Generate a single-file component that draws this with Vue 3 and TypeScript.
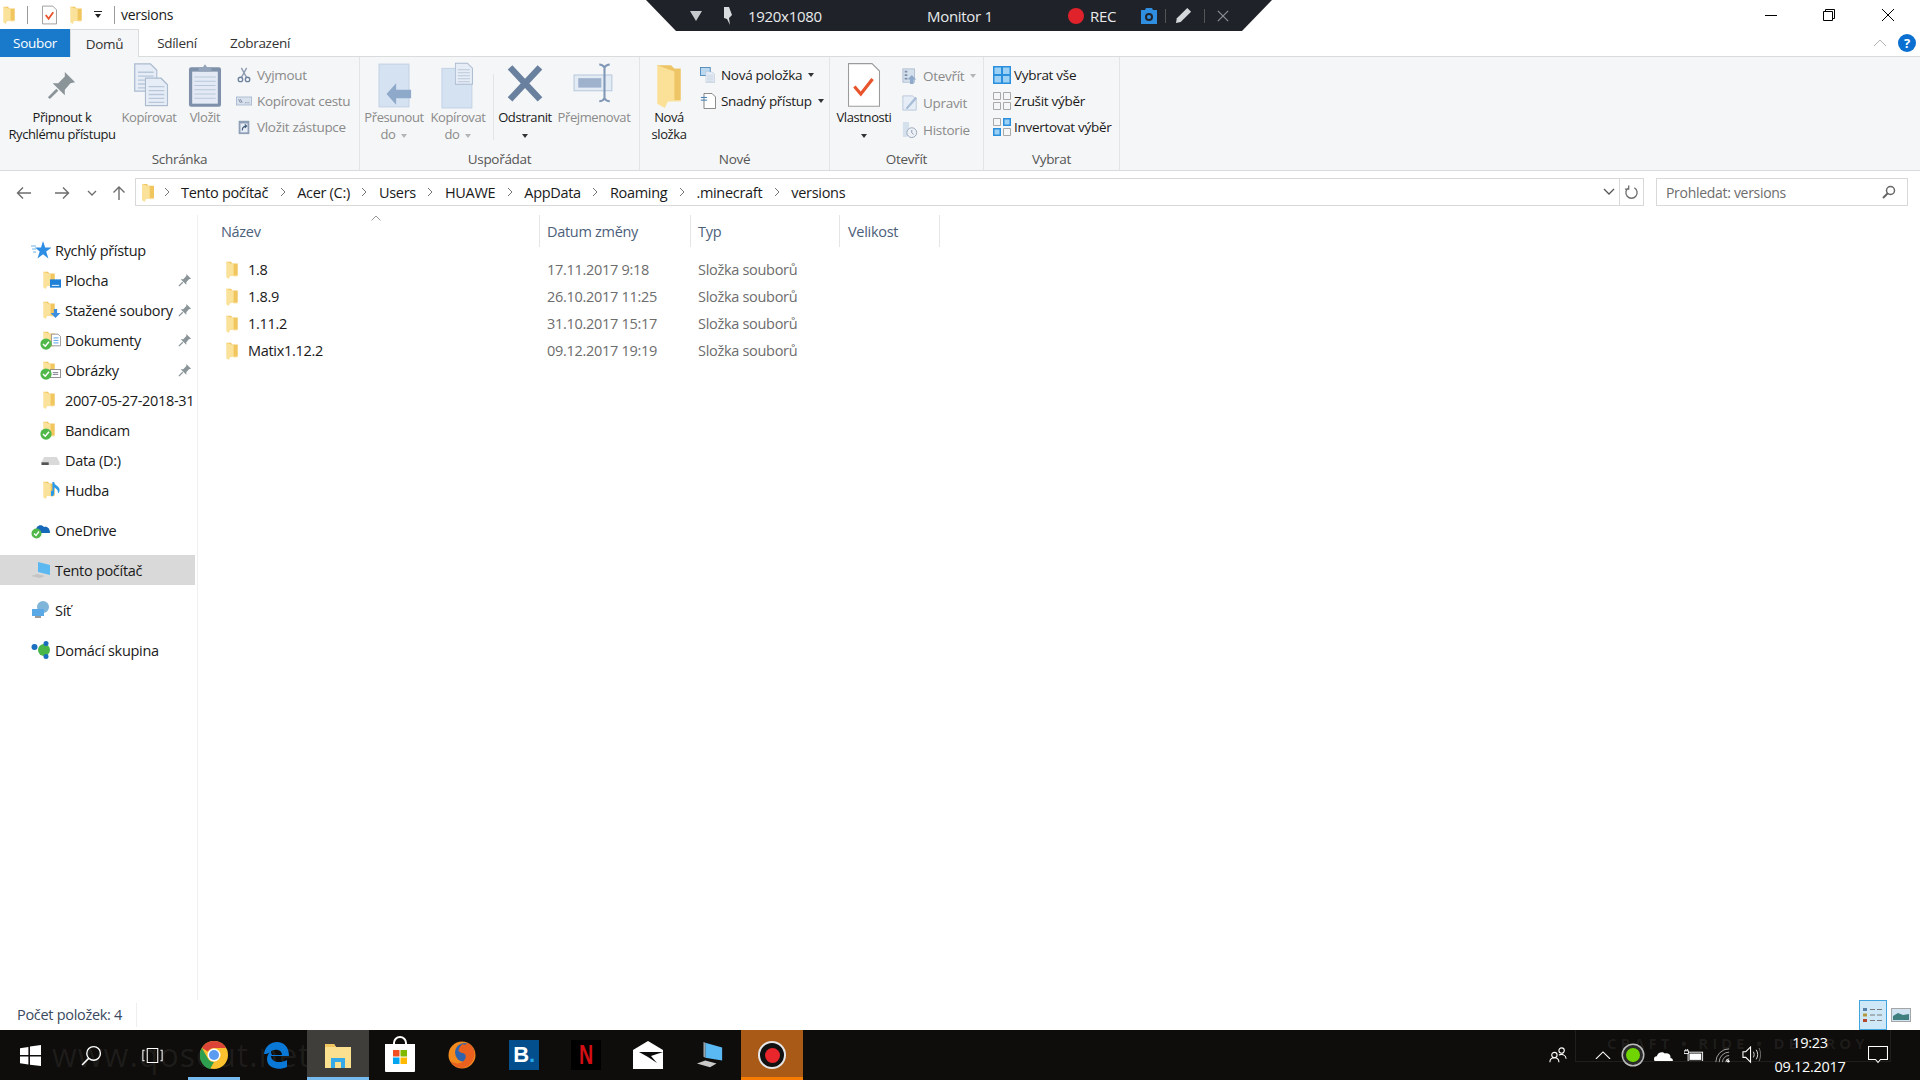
<script setup lang="ts">
interface NavItem {
  name: string
  icon: string
  badge?: string
  check?: boolean
  pin?: boolean
}

const crumbs = ['Tento počítač', 'Acer (C:)', 'Users', 'HUAWE', 'AppData', 'Roaming', '.minecraft', 'versions']

const quick: NavItem[] = [
  { name: 'Plocha', icon: 'folder', badge: 'desk', pin: true },
  { name: 'Stažené soubory', icon: 'folder', badge: 'down', pin: true },
  { name: 'Dokumenty', icon: 'folder', badge: 'doc', check: true, pin: true },
  { name: 'Obrázky', icon: 'folder', badge: 'pic', check: true, pin: true },
  { name: '2007-05-27-2018-31', icon: 'folder' },
  { name: 'Bandicam', icon: 'folder', check: true },
  { name: 'Data (D:)', icon: 'drive' },
  { name: 'Hudba', icon: 'folder', badge: 'music' }
]

const files = [
  { name: '1.8', date: '17.11.2017 9:18' },
  { name: '1.8.9', date: '26.10.2017 11:25' },
  { name: '1.11.2', date: '31.10.2017 15:17' },
  { name: 'Matix1.12.2', date: '09.12.2017 19:19' }
]
</script>

<template>
  <div class="screen">
    <svg class="defs" width="0" height="0">
      <symbol id="folder" viewBox="0 0 14 22">
        <path d="M0 1h6l1 2h7v15H4z" fill="#f2c65f" />
        <path d="M0 1l9 3v15l4 0v-1H5L3 22 0 20z" fill="#fbe29a" />
      </symbol>
      <symbol id="check" viewBox="0 0 16 16">
        <circle cx="8" cy="8" r="7.5" fill="#4fb848" />
        <path d="M4 8l3 3 5-6" fill="none" stroke="#fff" stroke-width="2" />
      </symbol>
      <symbol id="pin" viewBox="0 0 32 32">
        <path d="M19 2l11 11-5 1-6 7 0 6L6 14l6 0 7-7z" fill="#8b9599" />
        <path d="M11 21L2 30" stroke="#8b9599" stroke-width="3" />
      </symbol>
      <symbol id="page" viewBox="0 0 18 22">
        <path d="M.5.500h12l5 5v16H.5z" fill="#e6edf6" stroke="#aabbd0" />
        <path d="M3 7h12M3 10h12M3 13h12M3 16h12M3 19h12" stroke="#b8c7d9" />
      </symbol>
      <symbol id="grid-on" viewBox="0 0 18 18">
        <path d="M0 0h18v18H0z" fill="#2a8fdc" />
        <path d="M1.500 1.500h6.500v6.500H1.500zM10 1.500h6.500v6.500H10zM1.500 10h6.500v6.500H1.500zM10 10h6.500v6.500H10z" fill="#9cd0f4" />
      </symbol>
      <symbol id="grid-off" viewBox="0 0 18 18">
        <path d="M.5.500h7v7h-7zM10.500.500h7v7h-7zM.500 10.500h7v7h-7zM10.500 10.500h7v7h-7z" fill="none" stroke="#a9a9a9" />
      </symbol>
    </svg>

    <header class="titlebar">
      <svg class="t-folder"><use href="#folder" /></svg>
      <span class="t-sep"></span>
      <svg class="t-check" viewBox="0 0 16 20">
        <path d="M.5.500h11l4 4v15H.5z" fill="#fff" stroke="#9a9a9a" />
        <path d="M4 10l3 4 5-7" fill="none" stroke="#e8552d" stroke-width="2" />
      </svg>
      <svg class="t-folder2"><use href="#folder" /></svg>
      <svg class="t-drop" viewBox="0 0 8 7"><path d="M0 0h8v1H0zM1 3h6L4 7z" fill="#222" /></svg>
      <span class="t-sep t-sep2"></span>
      <span class="t-name">versions</span>
      <div class="win-btns">
        <svg viewBox="0 0 14 14"><path d="M1 7.500h12" stroke="#000" /></svg>
        <svg viewBox="0 0 14 14"><path d="M1.500 3.500h9v9h-9zM3.500 3.500v-2h9v9h-2" fill="none" stroke="#000" /></svg>
        <svg viewBox="0 0 14 14"><path d="M1 1l12 12M13 1L1 13" stroke="#000" /></svg>
      </div>
    </header>

    <div class="recorder">
      <svg class="r-tri" viewBox="0 0 12 10"><path d="M0 0h12L6 10z" fill="#c6c9cc" /></svg>
      <svg class="r-pin" viewBox="0 0 12 20">
        <path d="M3 1h5l3 8-3 3 1 7-3-6-3-1z" fill="#d9dcdf" />
      </svg>
      <span class="r-res">1920x1080</span>
      <span class="r-mon">Monitor 1</span>
      <span class="r-dot"></span>
      <span class="r-rec">REC</span>
      <svg class="r-cam" viewBox="0 0 18 18">
        <path d="M1 3h4l1-2h6l1 2h4v14H1z" fill="#2f8ee0" />
        <circle cx="9" cy="10" r="4" fill="#1f2329" />
        <circle cx="9" cy="10" r="2" fill="#2f8ee0" />
      </svg>
      <span class="r-sep"></span>
      <svg class="r-pen" viewBox="0 0 18 18"><path d="M13 1l4 4L6 16l-5 1 1-5z" fill="#d5d8db" /></svg>
      <span class="r-sep r-sep2"></span>
      <svg class="r-x" viewBox="0 0 14 14"><path d="M1 1l12 12M13 1L1 13" stroke="#878b90" stroke-width="1.500" /></svg>
    </div>

    <nav class="tabs">
      <span class="tab tab-file">Soubor</span>
      <span class="tab tab-home">Domů</span>
      <span class="tab tab-share">Sdílení</span>
      <span class="tab tab-view">Zobrazení</span>
      <svg class="tab-up" viewBox="0 0 14 8"><path d="M1 7l6-6 6 6" fill="none" stroke="#b5b5b5" /></svg>
      <span class="help">?</span>
    </nav>

    <section class="ribbon">
      <div class="group g-clip">
        <div class="body">
          <div class="big w-pin">
            <svg class="ico"><use href="#pin" x="6" y="8" width="30" height="30" /></svg>
            <span>Připnout k<br />Rychlému přístupu</span>
          </div>
          <div class="big w-copy off">
            <svg class="ico" viewBox="0 0 36 44">
              <g transform="translate(4 1)"><use href="#page" width="22" height="27" /></g>
              <g transform="translate(14 14)"><use href="#page" width="22" height="28" /></g>
            </svg>
            <span>Kopírovat</span>
          </div>
          <div class="big w-paste off">
            <svg class="ico" viewBox="0 0 36 44">
              <rect x="3" y="5" width="30" height="37" rx="2" fill="#7e90aa" />
              <rect x="6" y="9" width="24" height="30" fill="#e3eaf5" />
              <path d="M8 14h20M8 18h20M8 22h20M8 26h20M8 30h20M8 34h20" stroke="#b9c7da" />
              <path d="M12 9V5h4l2-3 2 3h4v4z" fill="#93a3b9" />
            </svg>
            <span>Vložit</span>
          </div>
          <div class="small-col">
            <div class="small off">
              <svg viewBox="0 0 16 18"><path d="M5 1l6 11M11 1L5 12" stroke="#8d9bb0" stroke-width="1.500" /><circle cx="4" cy="14" r="2.500" fill="none" stroke="#6f82a0" stroke-width="1.500" /><circle cx="12" cy="14" r="2.500" fill="none" stroke="#6f82a0" stroke-width="1.500" /></svg>
              <span>Vyjmout</span>
            </div>
            <div class="small off">
              <svg viewBox="0 0 18 14"><rect x=".5" y="2.500" width="17" height="9" fill="#d8e2ef" stroke="#a9b9ce" /><path d="M3 5l2 4M5 5l2 4M10 9h1M12 9h1M14 9h1" stroke="#6f7f95" /></svg>
              <span>Kopírovat cestu</span>
            </div>
            <div class="small off">
              <svg viewBox="0 0 16 18"><rect x="2" y="2" width="12" height="15" fill="#8d9eb6" /><rect x="4" y="5" width="8" height="10" fill="#e6edf6" /><path d="M6 13c0-3 2-5 5-5M9 6l2 2-2 2" fill="none" stroke="#40597a" stroke-width="1.200" /></svg>
              <span>Vložit zástupce</span>
            </div>
          </div>
        </div>
        <div class="g-label">Schránka</div>
      </div>

      <div class="group g-org">
        <div class="body">
          <div class="big w-move off">
            <svg class="ico" viewBox="0 0 36 44">
              <rect x="4" y="2" width="28" height="40" fill="#d5e2f2" stroke="#c3d3e6" />
              <path d="M12 22l-9 10 9 10v-6h14V28H12z" fill="#8fa9ca" transform="translate(8 -2)" />
            </svg>
            <span>Přesunout<br />do<i class="caret off-caret"></i></span>
          </div>
          <div class="big w-copyto off">
            <svg class="ico" viewBox="0 0 36 44">
              <rect x="3" y="6" width="28" height="37" fill="#d5e2f2" stroke="#c3d3e6" />
              <g transform="translate(15 0)"><use href="#page" width="17" height="22" /></g>
            </svg>
            <span>Kopírovat<br />do<i class="caret off-caret"></i></span>
          </div>
          <span class="in-sep"></span>
          <div class="big w-del">
            <svg class="ico" viewBox="0 0 36 44"><path d="M4 5l28 30M32 5L4 35" stroke="#69809f" stroke-width="6" /></svg>
            <span>Odstranit<br /><i class="caret"></i></span>
          </div>
          <div class="big w-ren off">
            <svg class="ico" viewBox="0 0 40 44">
              <rect x="1" y="12" width="36" height="15" fill="#e3ebf5" stroke="#b8c8dc" />
              <rect x="5" y="15" width="22" height="9" fill="#9fb2cd" />
              <path d="M25 2c2 0 4 1 5 3 1-2 3-3 5-3M30 5v29M25 37c2 0 4-1 5-3 1 2 3 3 5 3" fill="none" stroke="#8198b6" stroke-width="2" />
            </svg>
            <span>Přejmenovat</span>
          </div>
        </div>
        <div class="g-label">Uspořádat</div>
      </div>

      <div class="group g-new">
        <div class="body">
          <div class="big w-newf">
            <svg class="ico" viewBox="0 0 36 44">
              <path d="M7 3h13l3 3h6v30H16z" fill="#eec566" />
              <path d="M7 3l16 6v27h6v1H17l-3 6-7-4z" fill="#fbe197" />
            </svg>
            <span>Nová<br />složka</span>
          </div>
          <div class="small-col">
            <div class="small">
              <svg viewBox="0 0 18 18"><rect x=".5" y=".5" width="11" height="9" fill="#bcd8ee" stroke="#4d86b8" /><g transform="translate(6 5)"><use href="#page" width="11" height="13" /></g></svg>
              <span>Nová položka</span><i class="caret c-after"></i>
            </div>
            <div class="small">
              <svg viewBox="0 0 18 18"><path d="M4.500.5h9l4 4v13h-13z" fill="#fff" stroke="#777" /><path d="M1 5h7M1 8h7" stroke="#2a6fb0" /></svg>
              <span>Snadný přístup</span><i class="caret c-after"></i>
            </div>
          </div>
        </div>
        <div class="g-label">Nové</div>
      </div>

      <div class="group g-open">
        <div class="body">
          <div class="big w-prop">
            <svg class="ico" viewBox="0 0 36 44">
              <path d="M3.500 1.500h22l7 7v33h-29z" fill="#fff" stroke="#9b9b9b" />
              <path d="M9 23l6 7 11-14" fill="none" stroke="#e8552d" stroke-width="3" />
            </svg>
            <span>Vlastnosti<br /><i class="caret"></i></span>
          </div>
          <div class="small-col tall">
            <div class="small off">
              <svg viewBox="0 0 18 18"><rect x="1" y="1" width="13" height="15" fill="#d5e0ed" stroke="#adbdd1" /><path d="M3 4h3M3 8h3M3 12h3" stroke="#7c8fa8" stroke-width="2" /><path d="M11 8l5 5h-3v5h-4v-5H6z" fill="#8fa9ca" /></svg>
              <span>Otevřít</span><i class="caret c-after off-caret"></i>
            </div>
            <div class="small off">
              <svg viewBox="0 0 18 18"><path d="M1 1h11l4 4v12H1z" fill="#e6edf6" stroke="#b6c5d8" /><path d="M4 15L15 2l2 2L6 16z" fill="#a7bcd6" /></svg>
              <span>Upravit</span>
            </div>
            <div class="small off">
              <svg viewBox="0 0 18 18"><path d="M1 0h7v14l-3 3H1z" fill="#d5e0ed" /><circle cx="11" cy="12" r="5.500" fill="#eef1f5" stroke="#8fa0b6" /><path d="M11 9v3l2 2" fill="none" stroke="#7e90a8" /></svg>
              <span>Historie</span>
            </div>
          </div>
        </div>
        <div class="g-label">Otevřít</div>
      </div>

      <div class="group g-sel">
        <div class="body">
          <div class="small-col sel-col">
            <div class="small">
              <svg><use href="#grid-on" /></svg>
              <span>Vybrat vše</span>
            </div>
            <div class="small">
              <svg><use href="#grid-off" /></svg>
              <span>Zrušit výběr</span>
            </div>
            <div class="small">
              <svg viewBox="0 0 18 18">
                <path d="M.5.500h7v7h-7zM10.500 10.500h7v7h-7z" fill="none" stroke="#a9a9a9" />
                <path d="M10 0h8v8h-8zM0 10h8v8H0z" fill="#2a8fdc" />
                <path d="M11.500 1.500h5v5h-5zM1.500 11.500h5v5h-5z" fill="#9cd0f4" />
              </svg>
              <span>Invertovat výběr</span>
            </div>
          </div>
        </div>
        <div class="g-label">Vybrat</div>
      </div>
    </section>

    <div class="addr-row">
      <svg class="nav-ic ic-back" viewBox="0 0 16 14"><path d="M15 7H2M7 1.500L1.500 7 7 12.500" fill="none" stroke="#6d6d6d" stroke-width="1.400" /></svg>
      <svg class="nav-ic ic-fwd" viewBox="0 0 16 14"><path d="M1 7h13M9 1.500L14.500 7 9 12.500" fill="none" stroke="#6d6d6d" stroke-width="1.400" /></svg>
      <svg class="nav-ic ic-down" viewBox="0 0 10 6"><path d="M1 1l4 4 4-4" fill="none" stroke="#6d6d6d" stroke-width="1.300" /></svg>
      <svg class="nav-ic ic-up" viewBox="0 0 14 16"><path d="M7 15V2M1.500 7.500L7 2l5.500 5.500" fill="none" stroke="#6d6d6d" stroke-width="1.400" /></svg>
      <div class="addr">
        <svg class="a-folder"><use href="#folder" /></svg>
        <svg class="chev first" viewBox="0 0 6 10"><path d="M1 1l4 4-4 4" fill="none" stroke="#777" /></svg>
        <template v-for="(c, i) in crumbs" :key="c">
          <span class="crumb">{{ c }}</span>
          <svg v-if="i < crumbs.length - 1" class="chev" viewBox="0 0 6 10"><path d="M1 1l4 4-4 4" fill="none" stroke="#777" /></svg>
        </template>
        <svg class="a-drop" viewBox="0 0 12 8"><path d="M1 1l5 5 5-5" fill="none" stroke="#555" stroke-width="1.300" /></svg>
        <div class="a-refresh">
          <svg viewBox="0 0 16 16"><path d="M5 2.500A6 6 0 1 0 11 2.500M5 0v4H1" fill="none" stroke="#6d6d6d" stroke-width="1.400" transform="translate(0 1)" /></svg>
        </div>
      </div>
      <div class="search">
        <span>Prohledat: versions</span>
        <svg viewBox="0 0 14 14"><circle cx="8.500" cy="5.500" r="4" fill="none" stroke="#666" stroke-width="1.500" /><path d="M6 8l-5 5" stroke="#666" stroke-width="2" /></svg>
      </div>
    </div>

    <main class="main">
      <aside class="side">
        <div class="nav top">
          <svg class="nav-top-ic" viewBox="0 0 20 18"><path d="M12 0l2.200 6.500H20.500l-5.300 4 2.200 7-5.400-4.200-5.500 4.200 2.200-7L4 6.500h6z" fill="#2e8ee4" /><path d="M0 5h5M1 8h4M2 11h3" stroke="#6cb2ec" /></svg>
          <span>Rychlý přístup</span>
        </div>
        <div v-for="item in quick" :key="item.name" class="nav sub">
          <span class="nav-icon">
            <svg v-if="item.icon === 'folder'" class="f"><use href="#folder" /></svg>
            <svg v-else class="dr" viewBox="0 0 20 10"><path d="M3 1h14l3 6v3H0V7z" fill="#d9d9d9" /><path d="M0 7h8v3H0z" fill="#555" /></svg>
            <svg v-if="item.badge === 'desk'" class="b" viewBox="0 0 12 9"><rect width="12" height="9" fill="#1f80d8" /><rect x="2" y="6" width="8" height="1" fill="#fff" /></svg>
            <svg v-if="item.badge === 'down'" class="b" viewBox="0 0 12 11"><path d="M4 0h4v5h4l-6 6-6-6h4z" fill="#3a8ede" /></svg>
            <svg v-if="item.badge === 'doc'" class="b doc" viewBox="0 0 12 15"><path d="M.5.500h8l3 3v11H.5z" fill="#fff" stroke="#888" /><path d="M3 5h6M3 8h6M3 11h6" stroke="#3a8ede" /></svg>
            <svg v-if="item.badge === 'pic'" class="b" viewBox="0 0 12 10"><rect x=".5" y=".5" width="11" height="9" fill="#fff" stroke="#888" /><path d="M3 4h6M3 6h6" stroke="#778" /></svg>
            <svg v-if="item.badge === 'music'" class="b music" viewBox="0 0 10 20"><path d="M3 1v13a3 3 0 1 1-2-3V1h2c0 4 6 4 6 9 0 2-1 3-2 4 1-4-2-5-4-7z" fill="#2a9ae8" /></svg>
            <svg v-if="item.check" class="c"><use href="#check" /></svg>
          </span>
          <span class="nav-text">{{ item.name }}</span>
          <svg v-if="item.pin" class="nav-pin"><use href="#pin" /></svg>
        </div>
        <div class="nav top gap">
          <svg class="nav-top-ic" viewBox="0 0 20 18"><path d="M5 11c-1-6 5-9 8-5 3-1 6 1 6 6H7z" fill="#1668b8" /><circle cx="5.500" cy="12.500" r="5" fill="#4fb848" /><path d="M3 12.500l2 2 3-4" fill="none" stroke="#fff" stroke-width="1.300" /></svg>
          <span>OneDrive</span>
        </div>
        <div class="nav top gap selected">
          <svg class="nav-top-ic" viewBox="0 0 20 18"><path d="M7 1l12 3v10L7 11z" fill="#5cb8f0" /><path d="M0 15l6-2 8 2-5 2z" fill="#c4c4c4" /></svg>
          <span>Tento počítač</span>
        </div>
        <div class="nav top gap">
          <svg class="nav-top-ic" viewBox="0 0 20 18"><circle cx="12" cy="6" r="6" fill="#7fb5d8" /><path d="M1 8h12v7H1z" fill="#5aa9e6" /><path d="M4 15h6v2H4z" fill="#999" /></svg>
          <span>Síť</span>
        </div>
        <div class="nav top gap">
          <svg class="nav-top-ic" viewBox="0 0 20 18"><circle cx="3.500" cy="6" r="3" fill="#1a6fc0" /><circle cx="13" cy="9" r="6" fill="#49b649" /><circle cx="15" cy="2.500" r="2.500" fill="#1a6fc0" /><circle cx="15" cy="15.500" r="2.500" fill="#1a6fc0" /></svg>
          <span>Domácí skupina</span>
        </div>
      </aside>

      <div class="list">
        <svg class="sort" viewBox="0 0 10 6"><path d="M.5 5.500L5 1l4.500 4.500" fill="none" stroke="#9a9a9a" /></svg>
        <div class="head">
          <span class="col c-name">Název</span>
          <span class="col c-date">Datum změny</span>
          <span class="col c-type">Typ</span>
          <span class="col c-size">Velikost</span>
        </div>
        <div class="rows">
          <div v-for="f in files" :key="f.name" class="row">
            <span class="cell c-name name-cell">
              <svg class="row-folder"><use href="#folder" /></svg>
              {{ f.name }}
            </span>
            <span class="cell c-date">{{ f.date }}</span>
            <span class="cell c-type">Složka souborů</span>
          </div>
        </div>
      </div>
    </main>

    <footer class="status">
      <span class="count">Počet položek: 4</span>
      <div class="views">
        <span class="view active">
          <svg viewBox="0 0 20 16"><path d="M0 1h4v3H0z" fill="#5a7fa8" /><path d="M0 6.500h4v3H0z" fill="#b39a3e" /><path d="M0 12h4v3H0z" fill="#b5472e" /><path d="M7 2.500h5M14 2.500h5M7 8h5M14 8h5M7 13.500h5M14 13.500h5" stroke="#7a7a7a" /></svg>
        </span>
        <span class="view">
          <svg viewBox="0 0 20 14"><rect x=".5" y=".5" width="19" height="13" fill="#cfe3f2" stroke="#a5a5a5" /><path d="M2 8l5-3 5 2 6-1v6H2z" fill="#3f7f7f" /></svg>
        </span>
      </div>
    </footer>

    <div class="taskbar">
      <span class="wm wm-left">www.qosout.net</span>
      <span class="wm wm-right">CRAFT • RIDE • DESTROY</span>
      <span class="wm-frame"></span>
      <div class="tb start"><svg viewBox="0 0 20 20"><path d="M0 3l8-1.200V9.500H0zM9.500 1.500L20 0v9.500H9.500zM0 11h8v7.500L0 17.300zM9.500 11H20v9L9.500 18.700z" fill="#fff" /></svg></div>
      <div class="tb start"><svg viewBox="0 0 20 20"><circle cx="12" cy="8" r="6.500" fill="none" stroke="#fff" stroke-width="1.300" /><path d="M7.500 12.500L1 19" stroke="#fff" stroke-width="1.500" /></svg></div>
      <div class="tb start"><svg viewBox="0 0 24 20"><path d="M6 2h12v16H6z" fill="none" stroke="#fff" stroke-width="1.200" /><path d="M3 4H1v12h2M21 4h2v12h-2" fill="none" stroke="#fff" stroke-width="1.200" /></svg></div>
      <div class="tb lined">
        <svg class="big-ic" viewBox="0 0 28 28">
          <circle cx="14" cy="14" r="14" fill="#fbc02d" />
          <path d="M14 0a14 14 0 0 1 12.100 7H14a7 7 0 0 0-6.100 3.500L1.900 7A14 14 0 0 1 14 0z" fill="#db4437" />
          <path d="M1.900 7l6 10.500A7 7 0 0 0 14 21l-4 7A14 14 0 0 1 1.900 7z" fill="#2e9e4f" />
          <circle cx="14" cy="14" r="6.500" fill="#fff" />
          <circle cx="14" cy="14" r="5" fill="#5b9bf0" />
        </svg>
      </div>
      <div class="tb">
        <svg class="big-ic" viewBox="0 0 28 28">
          <path d="M2 13C3 5 9 1 15 1c7 0 12 5 12 14H9c0 6 9 8 16 4v7c-9 4-20 1-20-8 0-3 1-5 4-8 0 1 0 2 1 4h10c0-6-9-7-13-2-2 1-4 1-5 1z" fill="#0a78d7" />
        </svg>
      </div>
      <div class="tb active lined">
        <svg class="big-ic" viewBox="0 0 28 28">
          <path d="M1 3h9l2 3h15v21H1z" fill="#fbe08f" />
          <path d="M1 3h9l2 3H1z" fill="#f2c65f" />
          <path d="M7 27v-10h14v10h-4v-6h-6v6z" fill="#36a9e8" />
        </svg>
      </div>
      <div class="tb">
        <svg class="big-ic store" viewBox="0 0 30 36">
          <path d="M9 12V7a6 6 0 0 1 12 0v5" fill="none" stroke="#fff" stroke-width="2" />
          <path d="M0 8h30v27a1 1 0 0 1-1 1H1a1 1 0 0 1-1-1z" fill="#fff" />
          <path d="M8 14h6.500v6.500H8z" fill="#f25022" /><path d="M15.500 14H22v6.500h-6.500z" fill="#7fba00" />
          <path d="M8 21.500h6.500V28H8z" fill="#00a4ef" /><path d="M15.500 21.500H22V28h-6.500z" fill="#ffb900" />
        </svg>
      </div>
      <div class="tb">
        <svg class="big-ic" viewBox="0 0 28 28">
          <circle cx="14" cy="14" r="13.500" fill="#f28a1e" />
          <circle cx="16.500" cy="11.500" r="9.500" fill="#2f64ad" />
          <path d="M20 2c4 2 7 7 6.500 12-1 8-7 13-13 13-5 0-9-3-11-7 5 4 13 3 15-3 1-3-1-5-4-5l-3-2c0-3 2-5 4-7 1 1 4 1 5.500-1z" fill="#e9601f" />
        </svg>
      </div>
      <div class="tb"><span class="app-b">B<i>.</i></span></div>
      <div class="tb"><span class="app-n"><i>N</i></span></div>
      <div class="tb">
        <svg class="big-ic mail" viewBox="0 0 30 30">
          <path d="M0 10L15 1l15 9v19H0z" fill="#fff" />
          <path d="M6 12h24L18 16l6 7-9-6z" fill="#0b0b0b" />
        </svg>
      </div>
      <div class="tb">
        <svg class="big-ic" viewBox="0 0 30 28">
          <path d="M10 1l18 5v14l-18-3z" fill="#5ab8f2" />
          <path d="M8 0l2 1v16l-2-1z" fill="#9aa3aa" />
          <path d="M1 23l9-3 12 3-7 4z" fill="#c9c9c9" />
        </svg>
      </div>
      <div class="tb rec-app">
        <span class="bdc"><span></span></span>
      </div>
      <div class="tray">
        <svg class="tr tr-people" viewBox="0 0 20 18"><circle cx="6" cy="9" r="3" fill="none" stroke="#fff" stroke-width="1.200" /><circle cx="14" cy="4" r="3" fill="none" stroke="#fff" stroke-width="1.200" /><path d="M1 17c0-3 2-5 5-5s5 2 5 5M11 9c3-2 8 0 8 4" fill="none" stroke="#fff" stroke-width="1.200" /></svg>
        <svg class="tr tr-up" viewBox="0 0 18 10"><path d="M1 9l8-8 8 8" fill="none" stroke="#fff" stroke-width="1.200" /></svg>
        <span class="tr-green"></span>
        <svg class="tr tr-cloud" viewBox="0 0 22 14"><path d="M3 14a3 3 0 0 1 0-6c1-4 6-6 9-3 4-1 7 2 6 5 3 0 4 4 1 4z" fill="#fff" /></svg>
        <svg class="tr tr-bat" viewBox="0 0 22 14"><rect x="4.500" y="3.500" width="16" height="10" fill="none" stroke="#fff" /><rect x="6" y="5" width="13" height="7" fill="#fff" /><path d="M0 2h5v3H0zM2 0v2M4 0v2" stroke="#fff" /></svg>
        <svg class="tr tr-wifi" viewBox="0 0 18 18"><path d="M1 17A16 16 0 0 1 17 1M5 17A12 12 0 0 1 17 5M9 17a8 8 0 0 1 8-8" fill="none" stroke="#aaa" stroke-width="1.100" /><path d="M13 17a4 4 0 0 1 4-4" fill="none" stroke="#fff" stroke-width="1.100" /><circle cx="16" cy="16" r="1.500" fill="#fff" /></svg>
        <svg class="tr tr-vol" viewBox="0 0 20 18"><path d="M1 6h3l5-5v16l-5-5H1z" fill="none" stroke="#fff" stroke-width="1.100" /><path d="M12 6c1 2 1 4 0 6M15 4c2 3 2 7 0 10" fill="none" stroke="#ddd" /><path d="M18 2c2 4 2 10 0 14" fill="none" stroke="#777" /></svg>
        <div class="clock"><span>19:23</span><span>09.12.2017</span></div>
        <svg class="tr tr-note" viewBox="0 0 20 18"><path d="M.5.500h19v13h-7l-2.500 3-2.500-3h-7z" fill="none" stroke="#fff" stroke-width="1.100" /></svg>
      </div>
    </div>
  </div>
</template>

<style scoped>
.screen {
  position: relative;
  width: 1920px;
  height: 1080px;
  display: flex;
  flex-direction: column;
  overflow: hidden;
  background: #fff;
  color: #1a1a1a;
  font-family: "Open Sans", "Noto Sans", sans-serif;
  font-size: 14px;
  letter-spacing: -0.3px;
}
.defs { position: absolute; }
svg { display: block; flex: none; }
i { font-style: normal; }

.titlebar {
  height: 29px;
  display: flex;
  align-items: center;
  flex: none;
}
.t-folder { width: 12px; height: 18px; margin-left: 3px; }
.t-sep { width: 1px; height: 18px; background: #9a9a9a; margin-left: 12px; }
.t-check { width: 15px; height: 20px; margin-left: 14px; }
.t-folder2 { width: 12px; height: 18px; margin-left: 13px; }
.t-drop { width: 8px; height: 7px; margin-left: 12px; }
.t-sep2 { margin-left: 12px; }
.t-name { margin-left: 6px; }
.win-btns {
  margin-left: auto;
  display: flex;
  gap: 44.600px;
  padding-right: 25px;
}
.win-btns svg { width: 14px; height: 14px; }

.recorder {
  position: absolute;
  top: 0;
  left: 646px;
  width: 626px;
  height: 31px;
  display: flex;
  align-items: center;
  background: #1f2329;
  color: #e8eaec;
  font-size: 15px;
  clip-path: polygon(0 0, 100% 0, calc(100% - 30px) 100%, 30px 100%);
}
.r-tri { width: 12px; height: 10px; margin-left: 44px; }
.r-pin { width: 12px; height: 20px; margin-left: 19px; }
.r-res { width: 96px; margin-left: 15px; }
.r-mon { width: 110px; margin-left: 83px; }
.r-dot { width: 16px; height: 16px; border-radius: 50%; background: #e0222b; margin-left: 31px; }
.r-rec { width: 42px; margin-left: 6px; font-size: 15px; }
.r-cam { width: 18px; height: 18px; margin-left: 8px; }
.r-sep { width: 1px; height: 14px; background: #555; margin-left: 7px; }
.r-pen { width: 17px; height: 17px; margin-left: 9px; }
.r-sep2 { margin-left: 12px; }
.r-x { width: 12px; height: 12px; margin-left: 12px; }

.tabs {
  height: 28px;
  flex: none;
  display: flex;
  align-items: stretch;
  position: relative;
  margin-bottom: -1px;
  z-index: 1;
}
.tab {
  display: flex;
  align-items: center;
  justify-content: center;
  color: #333;
  font-size: 13.500px;
}
.tab-file { width: 70px; background: #1979ca; color: #fff; }
.tab-home {
  width: 69px;
  background: #f5f6f7;
  border: 1px solid #dadbdc;
  border-bottom: none;
  box-sizing: border-box;
}
.tab-share { width: 76px; }
.tab-view { width: 90px; }
.tab-up { width: 14px; height: 8px; margin: 10px 0 0 auto; }
.help {
  width: 18px;
  height: 18px;
  border-radius: 50%;
  background: #0a6fd0;
  color: #fff;
  font-size: 13px;
  font-weight: 700;
  text-align: center;
  line-height: 18px;
  margin: 5px 4px 0 11px;
}

.ribbon {
  height: 113px;
  flex: none;
  display: flex;
  background: #f5f6f7;
  border-top: 1px solid #dadbdc;
  border-bottom: 1px solid #dadbdc;
  box-sizing: content-box;
}
.group {
  display: flex;
  flex-direction: column;
  flex: none;
  box-sizing: border-box;
  padding-top: 5px;
  border-right: 1px solid #e2e4e7;
}
.g-clip { width: 360px; }
.g-org { width: 280px; }
.g-new { width: 190px; }
.g-open { width: 154px; }
.g-sel { width: 136px; }
.body { flex: 1; display: flex; min-height: 0; }
.g-label {
  height: 19px;
  line-height: 17px;
  text-align: center;
  color: #555;
  font-size: 13.500px;
}
.big {
  display: flex;
  flex-direction: column;
  align-items: center;
  text-align: center;
  line-height: 17px;
  flex: none;
  font-size: 13px;
  letter-spacing: -0.4px;
}
.ico { width: 42px; height: 47px; }
.off { color: #8a8a8a; }
.w-pin { width: 124px; }
.w-copy { width: 50px; }
.w-paste { width: 50px; margin-left: 6px; }
.w-move { width: 68px; }
.w-copyto { width: 60px; }
.in-sep { width: 1px; height: 66px; background: #e2e4e7; margin: 12px 1px 0 5px; flex: none; }
.w-del { width: 60px; }
.w-ren { width: 78px; }
.w-newf { width: 58px; }
.w-prop { width: 68px; }
.caret {
  display: inline-block;
  width: 0;
  height: 0;
  border: 3.500px solid transparent;
  border-top: 4px solid #333;
  border-bottom: none;
  vertical-align: middle;
}
.off-caret { border-top-color: #b5b5b5; margin-left: 6px; }
.c-after { margin-left: 1px; }
.small-col { display: flex; flex-direction: column; margin-left: 6px; }
.small {
  height: 26px;
  display: flex;
  align-items: center;
  gap: 5px;
  font-size: 13.500px;
  white-space: nowrap;
}
.small svg { width: 16px; height: 16px; }
.tall { margin-left: 4px; }
.tall .small { height: 27px; }
.g-new .small-col { margin-left: 2px; }
.sel-col { margin-left: 9px; }
.sel-col .small svg { width: 18px; height: 18px; }
.sel-col .small { gap: 3px; }

.addr-row {
  height: 44px;
  flex: none;
  box-sizing: border-box;
  padding-top: 7px;
  display: flex;
  align-items: flex-start;
}
.nav-ic { flex: none; margin-top: 8px; }
.ic-back { width: 16px; height: 14px; margin-left: 16px; }
.ic-fwd { width: 16px; height: 14px; margin-left: 22px; }
.ic-down { width: 10px; height: 6px; margin: 12px 0 0 17px; }
.ic-up { width: 14px; height: 16px; margin: 7px 0 0 15px; }
.addr {
  margin-left: 9px;
  width: 1509px;
  height: 28px;
  box-sizing: border-box;
  border: 1px solid #d9d9d9;
  display: flex;
  align-items: center;
}
.a-folder { width: 12px; height: 19px; margin-left: 6px; }
.crumb { white-space: nowrap; font-size: 14.500px; }
.chev { width: 6px; height: 10px; margin: 0 11.500px; }
.chev.first { margin: 0 11px 0 10px; }
.a-drop { width: 12px; height: 8px; margin-left: auto; }
.a-refresh {
  width: 23px;
  height: 100%;
  margin-left: 4px;
  border-left: 1px solid #d9d9d9;
  display: flex;
  align-items: center;
  justify-content: center;
}
.a-refresh svg { width: 15px; height: 16px; }
.search {
  margin-left: 12px;
  width: 252px;
  height: 28px;
  box-sizing: border-box;
  border: 1px solid #d9d9d9;
  display: flex;
  align-items: center;
  justify-content: space-between;
  padding: 0 11px 0 9px;
  color: #6d6d6d;
}
.search svg { width: 14px; height: 14px; }

.main { flex: 1; display: flex; min-height: 0; }
.side {
  width: 198px;
  flex: none;
  box-sizing: border-box;
  padding: 20px 2px 0 0;
  border-right: 1px solid #f0f0f0;
  overflow: hidden;
}
.nav {
  height: 30px;
  display: flex;
  align-items: center;
  white-space: nowrap;
  position: relative;
  overflow: hidden;
  font-size: 14.500px;
}
.nav.top { padding-left: 31px; }
.nav.gap { margin-top: 10px; }
.nav.selected { background: #d9d9d9; }
.nav-top-ic { width: 20px; height: 18px; margin-right: 4px; }
.nav.sub { padding-left: 41px; }
.nav-icon { position: relative; width: 20px; height: 20px; margin-right: 4px; flex: none; }
.f { position: absolute; left: 2px; top: 1px; width: 12px; height: 18px; }
.dr { position: absolute; left: 0; top: 6px; width: 19px; height: 9px; }
.b { position: absolute; right: 0; bottom: 2px; width: 11px; height: 9px; }
.b.doc { height: 14px; width: 10px; bottom: 3px; }
.b.music { height: 18px; width: 10px; bottom: 1px; }
.c { position: absolute; left: -1px; bottom: 0; width: 12px; height: 12px; }
.nav-pin { position: absolute; right: 3px; top: 8px; width: 14px; height: 14px; }

.list { flex: 1; position: relative; }
.sort { position: absolute; left: 173px; top: 0; width: 10px; height: 6px; }
.head { display: flex; height: 32px; color: #4c607a; font-size: 14.500px; }
.col {
  display: flex;
  align-items: center;
  box-sizing: border-box;
  border-right: 1px solid #e5e5e5;
}
.c-name { width: 342px; padding-left: 23px; }
.c-date { width: 151px; padding-left: 7px; }
.c-type { width: 149px; padding-left: 7px; }
.c-size { width: 100px; padding-left: 8px; }
.rows { margin-top: 9px; }
.row { display: flex; height: 27px; align-items: center; font-size: 14.500px; }
.cell { box-sizing: border-box; }
.cell.c-date, .cell.c-type { color: #6d6d6d; }
.name-cell { display: flex; align-items: center; padding-left: 28px; }
.row-folder { width: 12px; height: 18px; margin-right: 10px; }

.status {
  height: 30px;
  flex: none;
  display: flex;
  align-items: center;
  justify-content: space-between;
  color: #3a4a5e;
  font-size: 14.500px;
}
.count {
  margin-left: 17px;
  padding-right: 14px;
  border-right: 1px solid #eee;
  line-height: 24px;
}
.views { display: flex; height: 100%; padding-right: 5px; }
.view {
  width: 28px;
  box-sizing: border-box;
  border: 1px solid transparent;
  display: flex;
  align-items: center;
  justify-content: center;
}
.view.active { background: #cfe8f8; border-color: #43a5e0; }
.view svg { width: 20px; height: 16px; }

.taskbar {
  height: 50px;
  flex: none;
  display: flex;
  position: relative;
  background: #0e0d0b;
  overflow: hidden;
}
.wm {
  position: absolute;
  white-space: nowrap;
  color: rgba(255, 255, 255, 0.07);
}
.wm-left { left: 52px; top: 5px; font-size: 32px; line-height: 40px; letter-spacing: 1px; }
.wm-right { left: 1607px; top: 2px; font-size: 15px; line-height: 22px; font-weight: 700; letter-spacing: 3.900px; }
.wm-frame {
  position: absolute;
  left: 1575px;
  top: 0;
  width: 316px;
  height: 32px;
  box-sizing: border-box;
  border: 1px solid rgba(255, 255, 255, 0.08);
  border-top: none;
}
.tb {
  width: 62px;
  height: 100%;
  flex: none;
  box-sizing: border-box;
  display: flex;
  align-items: center;
  justify-content: center;
  position: relative;
}
.tb.start { width: 61px; }
.tb svg { width: 21px; height: 21px; }
.tb .big-ic { width: 28px; height: 28px; }
.tb .store { width: 30px; height: 36px; margin-bottom: 2px; }
.tb .mail { width: 30px; height: 30px; }
.tb.active { background: #3f3e3b; }
.tb.lined::after {
  content: "";
  position: absolute;
  left: 5px;
  right: 5px;
  bottom: 0;
  height: 3px;
  background: #76b9ed;
}
.tb.active.lined::after { left: 0; right: 0; }
.app-b {
  width: 30px;
  height: 30px;
  background: #034f8e;
  color: #fff;
  font: 700 22px/30px "Liberation Sans", sans-serif;
  text-align: center;
}
.app-b i { color: #27a9e8; }
.app-n {
  width: 30px;
  height: 30px;
  background: #000;
  color: #d30f15;
  font: 700 28px/30px "Liberation Sans", sans-serif;
  text-align: center;
}
.app-n i { display: inline-block; transform: scaleX(0.7); }
.rec-app { background: #a95a17; }
.rec-app::after {
  content: "";
  position: absolute;
  left: 0;
  right: 0;
  bottom: 0;
  height: 3px;
  background: #f57c00;
}
.bdc {
  width: 28px;
  height: 28px;
  box-sizing: border-box;
  border-radius: 50%;
  background: #111;
  border: 2px solid #e6e6e6;
  display: flex;
  align-items: center;
  justify-content: center;
}
.bdc span { width: 15px; height: 15px; border-radius: 50%; background: #e9262c; }
.tray {
  margin-left: auto;
  display: flex;
  align-items: center;
  color: #fff;
  padding-right: 32px;
  position: relative;
}
.tray .tr { height: auto; }
.tr-people { width: 18px; }
.tr-up { width: 16px; margin-left: 28px; }
.tr-green {
  width: 20px;
  height: 20px;
  box-sizing: border-box;
  border-radius: 50%;
  background: #6fd400;
  border: 3px solid #2a2a2a;
  box-shadow: 0 0 0 1.500px #bbb;
  margin-left: 12px;
}
.tr-cloud { width: 20px; margin-left: 11px; }
.tr-bat { width: 20px; margin-left: 10px; }
.tr-wifi { width: 15px; margin-left: 11px; }
.tr-vol { width: 19px; margin-left: 12px; }
.clock {
  width: 80px;
  margin-left: 9px;
  display: flex;
  flex-direction: column;
  align-items: center;
  line-height: 24px;
  font-size: 14.500px;
}
.tr-note { width: 20px; margin-left: 18px; }
</style>
